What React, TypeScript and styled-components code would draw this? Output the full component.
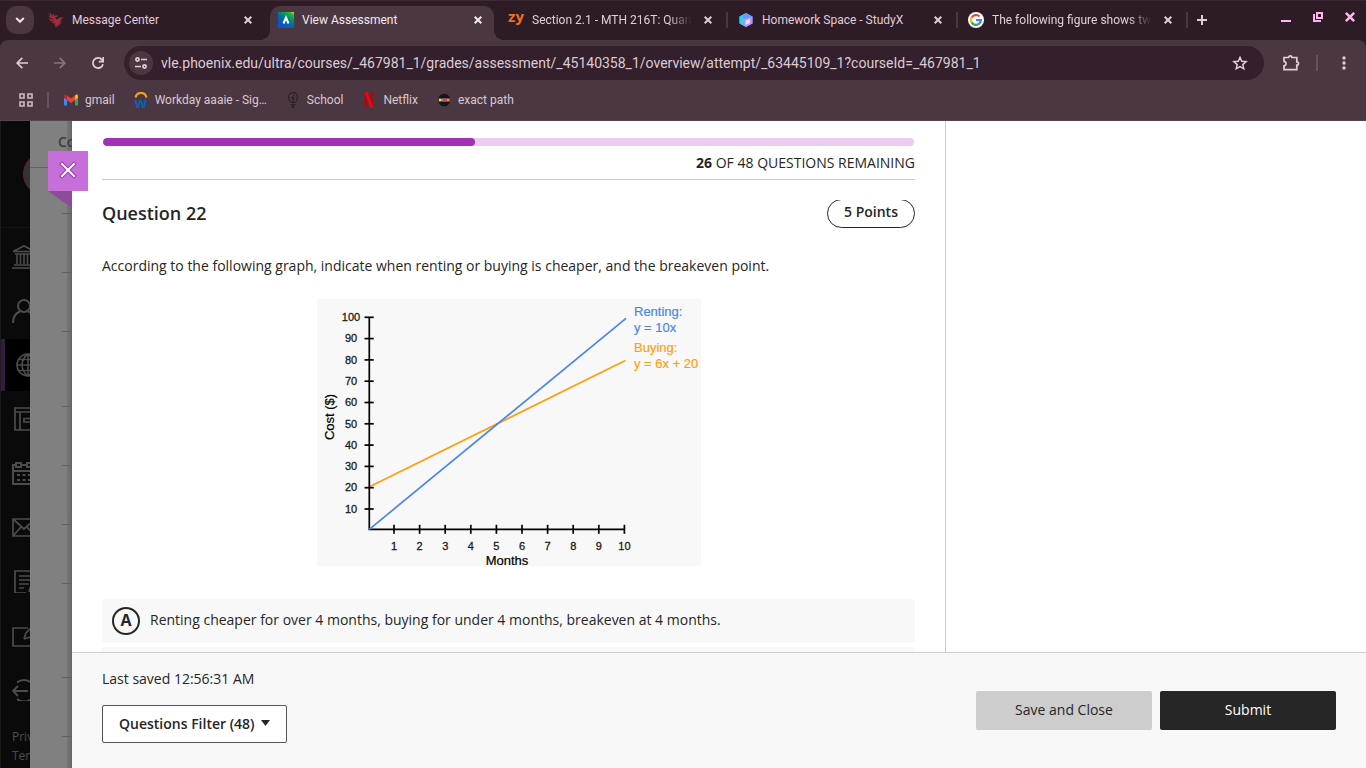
import React from "react";
import styled, { createGlobalStyle, css } from "styled-components";

const GlobalStyle = createGlobalStyle`
  *, *::before, *::after { box-sizing: border-box; }
  html, body { margin: 0; height: 100%; overflow: hidden; }
  body { background: #fff; color: #262626; font-family: "Open Sans", sans-serif; font-size: 14px; }
  #root { height: 100%; }
  button { font: inherit; color: inherit; cursor: pointer; }
  a { color: inherit; text-decoration: none; }
  svg { display: block; flex: none; }
`;

const Window = styled.div`
  display: flex;
  flex-direction: column;
  height: 100vh;
`;

/* ---------- Browser chrome ---------- */

const Chrome = styled.header`
  flex: none;
  background: #2d1b26;
  color: #e3cbd8;
  font-family: Roboto, sans-serif;
`;

const TabStrip = styled.div`
  display: flex;
  height: 40px;
  padding: 5px 6px 0;
  gap: 6px;
  border-top: 1px solid #3c2934;
`;

const PlainButton = styled.button`
  display: flex;
  align-items: center;
  justify-content: center;
  flex: none;
  padding: 0;
  border: 0;
  background: none;
`;

const TabSearch = styled(PlainButton)`
  width: 28px;
  height: 28px;
  border-radius: 10px;
  background: #4b3742;
  color: #f0dfe8;
`;

const Tab = styled.div<{ $active?: boolean; $divided?: boolean }>`
  position: relative;
  display: flex;
  flex: 0 1 224px;
  min-width: 0;
  height: 34px;
  padding: 0 8px 6px;
  align-items: center;
  gap: 8px;
  font-size: 12px;
  ${(p) =>
    p.$active &&
    css`
      background: #4b3742;
      color: #f5e9f0;
      border-radius: 10px 10px 0 0;
      &::before,
      &::after {
        content: "";
        position: absolute;
        bottom: 0;
        width: 10px;
        height: 10px;
      }
      &::before {
        left: -10px;
        background: radial-gradient(circle at 0 0, transparent 10px, #4b3742 10px);
      }
      &::after {
        right: -10px;
        background: radial-gradient(circle at 100% 0, transparent 10px, #4b3742 10px);
      }
    `}
  ${(p) =>
    p.$divided &&
    css`
      &::after {
        content: "";
        position: absolute;
        right: -4px;
        top: 6px;
        width: 2px;
        height: 16px;
        background: #4b3742;
      }
    `}
`;

const TabTitle = styled.span<{ $fade?: boolean }>`
  flex: 1;
  min-width: 0;
  overflow: hidden;
  white-space: nowrap;
  line-height: 16px;
  ${(p) => p.$fade && css`mask-image: linear-gradient(to right, #000 calc(100% - 24px), transparent);`}
`;

const TabClose = styled(PlainButton)`
  width: 16px;
  height: 16px;
`;

const NewTab = styled(PlainButton)`
  width: 24px;
  height: 28px;
`;

const WindowControls = styled.div`
  display: flex;
  margin-left: auto;
  height: 22px;
  gap: 16px;
  padding-right: 2px;
  color: #ffb5ee;
`;

const WindowButton = styled(PlainButton)`
  width: 16px;
`;

const Toolbar = styled.div`
  display: flex;
  align-items: center;
  height: 46px;
  padding: 0 5px;
  background: #4b3742;
  border-radius: 8px 8px 0 0;
`;

const NavButton = styled(PlainButton)<{ $dim?: boolean }>`
  width: 34px;
  height: 34px;
  margin-right: 4px;
  color: ${(p) => (p.$dim ? "#8a7380" : "#e8c9db")};
`;

const AddressBar = styled.form`
  display: flex;
  flex: 1;
  min-width: 0;
  align-items: center;
  height: 34px;
  margin-left: 5px;
  padding: 0 14px 0 5px;
  border-radius: 17px;
  background: #33202c;
`;

const SiteInfo = styled(PlainButton)`
  width: 24px;
  height: 24px;
  border-radius: 12px;
  background: #4b3742;
`;

const Address = styled.input`
  flex: 1;
  min-width: 0;
  padding: 0 8px;
  border: 0;
  outline: 0;
  background: none;
  color: #dccbd5;
  font: 14px/20px Roboto, sans-serif;
`;

const ToolbarEnd = styled.div`
  display: flex;
  align-items: center;
  margin-left: 17px;
  color: #e8c9db;
`;

const Divider = styled.span`
  flex: none;
  width: 2px;
  height: 16px;
  background: #66525d;
`;

const Extensions = styled(PlainButton)`
  width: 20px;
  height: 20px;
  margin-right: 15px;
`;

const Menu = styled(PlainButton)`
  width: 16px;
  height: 20px;
  margin: 0 9px 0 18px;
`;

const Bookmarks = styled.nav`
  display: flex;
  align-items: center;
  height: 35px;
  padding: 0 19px 6px;
  background: #4b3742;
  border-bottom: 1px solid #564550;
  gap: 14px;
  font-size: 12px;
  line-height: 16px;
`;

const BookmarkList = styled.div`
  display: flex;
  gap: 18px;
`;

const Bookmark = styled.a`
  display: flex;
  align-items: center;
  gap: 6px;
  white-space: nowrap;
  color: #d9c7d1;
`;

/* ---------- Page behind the panel ---------- */

const Page = styled.div`
  display: flex;
  flex: 1;
  min-height: 0;
`;

const Sidebar = styled.nav`
  display: flex;
  flex-direction: column;
  flex: none;
  width: 30px;
  overflow: hidden;
  background: #0a0a0a;
  border-left: 1px solid #1b1b1b;
  color: #4c4c4c;
`;

const Profile = styled.div`
  flex: none;
  height: 107px;
  margin-bottom: 3px;
  padding: 31px 0 0 22px;
  border-bottom: 1px solid #141414;
`;

const Avatar = styled.div`
  width: 44px;
  height: 44px;
  border: 1px solid #6b1f1f;
  border-radius: 22px;
  background: #333;
`;

const SideLinks = styled.div`
  display: flex;
  flex-direction: column;
  flex: none;
  gap: 2px;
`;

const SideLink = styled.a<{ $active?: boolean }>`
  display: flex;
  align-items: center;
  height: 52px;
  padding-left: 11px;
  ${(p) =>
    p.$active &&
    css`
      background: #000;
      border-left: 4px solid #351a40;
    `}
`;

const Legal = styled.div`
  display: flex;
  flex-direction: column;
  margin-top: 12px;
  padding-left: 11px;
  font-size: 12px;
  line-height: 19px;
  white-space: nowrap;
`;

const Backdrop = styled.div`
  flex: none;
  width: 42px;
  overflow: hidden;
  background: linear-gradient(to right, #808080 37px, #747474 37px, #707070 40px, #626262);
`;

const BackdropTitle = styled.div`
  height: 47px;
  padding-left: 28px;
  border-bottom: 1px solid #636363;
  color: #3c3c3c;
  font-weight: 600;
  line-height: 42px;
`;

const BackdropRow = styled.div<{ $height: number }>`
  height: ${(p) => p.$height}px;
  margin-left: 32px;
  border-bottom: 1px solid #606060;
`;

/* ---------- Assessment panel ---------- */

const Panel = styled.main`
  position: relative;
  display: flex;
  flex-direction: column;
  flex: 1;
  min-width: 0;
  background: #fff;
`;

const CloseTab = styled.div`
  position: absolute;
  top: 30px;
  left: -24px;
`;

const ClosePanel = styled(PlainButton)`
  width: 40px;
  height: 40px;
  padding-bottom: 2px;
  background: #c66fd8;
`;

const Fold = styled.div`
  width: 24px;
  height: 17px;
  background: #8d4b9b;
  clip-path: polygon(0 0, 100% 0, 100% 100%);
`;

const Body = styled.div`
  display: flex;
  flex: 1;
  min-height: 0;
  overflow: hidden;
`;

const Assessment = styled.section`
  flex: 1;
  min-width: 0;
  padding: 17px 30px 0;
`;

const Side = styled.aside`
  flex: none;
  width: 421px;
  border-left: 1px solid #ccc;
`;

const Progress = styled.div`
  height: 8px;
  margin: 0 1px;
  border-radius: 4px;
  overflow: hidden;
  background: #ebcdf0;
`;

const ProgressFill = styled.div`
  height: 100%;
  border-radius: 4px;
  background: #a232b4;
`;

const Remaining = styled.p`
  margin: 0;
  padding: 7px 0 6px;
  border-bottom: 1px solid #ccc;
  line-height: 20px;
  text-align: right;
`;

const QuestionHead = styled.div`
  display: flex;
  align-items: flex-end;
  justify-content: space-between;
  height: 28px;
  margin-top: 20px;
  overflow: hidden;
`;

const QuestionTitle = styled.h2`
  margin: 0;
  padding-bottom: 2px;
  font-size: 18px;
  font-weight: 600;
  line-height: 26px;
`;

const Points = styled.span`
  flex: none;
  width: 88px;
  height: 29px;
  border: 1px solid #262626;
  border-radius: 15px;
  font-weight: 600;
  line-height: 24px;
  text-align: center;
`;

const Prompt = styled.p`
  margin: 28px 0 23px;
  line-height: 20px;
`;

const Figure = styled.figure`
  display: flex;
  justify-content: center;
  margin: 0 0 33px;
`;

const Options = styled.ul`
  display: flex;
  flex-direction: column;
  gap: 4px;
  margin: 0;
  padding: 0;
  list-style: none;
`;

const Option = styled.li`
  display: flex;
  align-items: center;
  height: 44px;
  padding: 0 10px;
  gap: 10px;
  border-radius: 3px;
  background: #f8f8f8;
  line-height: 20px;
`;

const OptionText = styled.span`
  padding-bottom: 2px;
`;

const Letter = styled.span`
  display: flex;
  align-items: center;
  justify-content: center;
  width: 28px;
  height: 28px;
  padding-bottom: 2px;
  border: 2px solid #262626;
  border-radius: 14px;
  font-size: 16px;
  font-weight: 700;
`;

const Footer = styled.footer`
  display: flex;
  flex: none;
  justify-content: space-between;
  align-items: flex-end;
  padding: 16px 30px 25px;
  border-top: 1px solid #ccc;
  background: #f8f8f8;
`;

const Saved = styled.p`
  margin: 0 0 16px;
  line-height: 20px;
`;

const Filter = styled.button`
  display: flex;
  align-items: center;
  gap: 6px;
  height: 38px;
  padding: 0 16px 2px;
  border: 1px solid #555;
  border-radius: 2px;
  background: #fff;
  font-weight: 600;
`;

const Actions = styled.div`
  display: flex;
  gap: 8px;
  padding-bottom: 13px;
`;

const Action = styled.button<{ $primary?: boolean }>`
  width: 176px;
  height: 39px;
  padding: 0 0 2px;
  border: 0;
  border-radius: 2px;
  background: ${(p) => (p.$primary ? "#262626" : "#cdcdcd")};
  color: ${(p) => (p.$primary ? "#fff" : "#262626")};
`;

/* ---------- Icons ---------- */

const Cross = ({ size = 8, width = 2 }: { size?: number; width?: number }) => (
  <svg width={size} height={size} viewBox="0 0 8 8" stroke="currentColor" strokeWidth={width} fill="none">
    <path d="M.7.7 7.3 7.3M7.3.7.7 7.3" />
  </svg>
);

const PhoenixLogo = () => (
  <svg width="16" height="16" viewBox="0 0 16 16" fill="#9c3038">
    <path d="M.2.8 3.600 2.600 5.400 5.600 4 6.800 1.500 5 .2 3.400 2.800 4.600zM.4 5.600 3.200 7.400 5.800 7.800 5 9.600 2.400 9.200z" />
    <path d="M5.600 1.400C3.600 4 4 7 6 9.200L3.600 10.400 5.200 11.400 7.400 11 5.800 13.600 7.800 12.800 6.800 15.800 8.400 14.600 9.400 15.800 9.600 12.600 12 14 11 11.400 14.200 11.800 12 10 15 8.600 11.800 8.400 15.800 5.600 11.400 5.400 9.200 7.600 7.600 6.800 7.800 5 10.600 4.200 8.800 3.200 6.600 4z" />
  </svg>
);

const BlackboardLogo = () => (
  <svg width="16" height="16" viewBox="0 0 16 16">
    <defs>
      <linearGradient id="bb" x1="0.3" y1="1" x2="1" y2="0">
        <stop offset="0.1" stopColor="#0a55c2" />
        <stop offset="0.4" stopColor="#0668a8" />
        <stop offset="0.65" stopColor="#069a5c" />
        <stop offset="0.85" stopColor="#35b23c" />
        <stop offset="1" stopColor="#e8f000" />
      </linearGradient>
    </defs>
    <rect width="16" height="16" fill="url(#bb)" />
    <path d="M5.500 11.500 8 5.500l2.500 6" fill="none" stroke="#fff" strokeWidth="2" />
  </svg>
);

const ZyLogo = () => (
  <svg width="16" height="16" viewBox="0 0 16 16">
    <text x="8" y="10" textAnchor="middle" fontFamily="Open Sans" fontWeight="700" fontSize="15" fill="#f2701c">
      zy
    </text>
  </svg>
);

const StudyLogo = () => (
  <svg width="16" height="16" viewBox="0 0 16 16">
    <path d="m8 1 6.500 3.500v7L8 15 1.500 11.500v-7z" fill="#8a7cf4" />
    <path d="M8 1 1.500 4.500v7L6 14V6.500z" fill="#35cdf0" />
    <path d="m8 1 6.500 3.500L9 8 4 5z" fill="#5f9cf8" />
    <path d="M6 7 14.500 4.500v7L8 15l-2-1z" fill="#b394fb" />
    <path d="m7.500 8.500 4.500-2v4.500l-4.500 2z" fill="#eadcff" />
  </svg>
);

const GoogleLogo = () => (
  <svg width="16" height="16" viewBox="0 0 16 16" fill="none" strokeWidth="2.200">
    <circle cx="8" cy="8" r="8" fill="#fff" />
    <path d="M3.600 5.500A5 5 0 0 1 11.500 4.500" stroke="#ea4335" />
    <path d="M3.600 10.400a5 5 0 0 1 0-4.900" stroke="#fbbc05" />
    <path d="M11.200 11.700a5 5 0 0 1-7.600-1.300" stroke="#34a853" />
    <path d="M8 8.100h4.900a5 5 0 0 1-1.700 3.600" stroke="#4285f4" />
  </svg>
);

const GmailLogo = () => (
  <svg width="16" height="16" viewBox="0 0 16 16">
    <path d="M1 4v8.500a1 1 0 0 0 1 1h2V6.500z" fill="#4285f4" />
    <path d="M15 4v8.500a1 1 0 0 1-1 1h-2V6.500z" fill="#34a853" />
    <path d="M12 3.500 12 8l3-2.200V4c0-1.500-1.500-1.800-2.400-1z" fill="#fbbc04" />
    <path d="M1 4v1.800L4 8V3.500L3.400 3C2.500 2.200 1 2.500 1 4z" fill="#c5221f" />
    <path d="M4 8V3.500l4 3 4-3V8l-4 3z" fill="#ea4335" />
  </svg>
);

const WorkdayLogo = () => (
  <svg width="16" height="16" viewBox="0 0 16 16">
    <path d="M2.500 5.500C4 -.5 12 -.5 13.500 5.500" fill="none" stroke="#f6a01a" strokeWidth="2.200" />
    <text x="8" y="16" textAnchor="middle" fontFamily="Open Sans" fontWeight="700" fontSize="15" fill="#0c5eb4">
      w
    </text>
  </svg>
);

const BulbIcon = () => (
  <svg width="16" height="16" viewBox="0 0 16 16" fill="none" stroke="#2a2227" strokeWidth="1.200">
    <path d="M5.500 10.500C4.500 9 3.500 7.500 3.500 5.200a4.500 4.500 0 0 1 9 0c0 2.300-1 3.800-2 5.300zM5.500 12.500h5M6 14.200h4M7 15.500h2" />
    <path d="M9 3 7 6.200h2L7.500 10" />
  </svg>
);

const NetflixLogo = () => (
  <svg width="16" height="16" viewBox="0 0 16 16">
    <path d="M3.500 0h3v16l-3 .2zM9.500 0h3v16l-3-.3z" fill="#a80a12" />
    <path d="M3.500 0h3l6 16-3-.3z" fill="#e50914" />
  </svg>
);

const ExactPathLogo = () => (
  <svg width="16" height="16" viewBox="0 0 16 16">
    <path d="M4 5a5 5 0 0 1 8.500 0zM4 11a5 5 0 0 0 8.500 0z" fill="none" stroke="#151515" strokeWidth="2" />
    <path d="M3 8h2" stroke="#f7e018" strokeWidth="2.600" />
    <path d="M5 8h2" stroke="#1cc7d0" strokeWidth="2.600" />
    <path d="M7 8h3.500" stroke="#ee2a7b" strokeWidth="3.400" />
    <path d="M10.500 8H13.500" stroke="#f68b2c" strokeWidth="2.600" />
  </svg>
);

const SideIcon = ({ children }: { children: React.ReactNode }) => (
  <svg width="24" height="24" viewBox="0 0 24 24" fill="none" stroke="currentColor" strokeWidth="2">
    {children}
  </svg>
);

/* ---------- Chart ---------- */

const AXIS_X = 52;
const AXIS_Y = 230;

const CostChart = () => (
  <svg
    width="384"
    height="267"
    viewBox="0 0 384 267"
    fontFamily="Liberation Sans, sans-serif"
    fontSize="13"
    role="img"
    aria-label="Cost in dollars by months for renting and buying"
  >
    <rect width="384" height="267" fill="#f8f8f8" />
    <path d={`M${AXIS_X} ${AXIS_Y - 42}L308.300 61.600`} stroke="#ff9f0d" strokeWidth="1.700" />
    <g stroke="#000" strokeWidth="1.700" fill="none">
      <path d="M52.300 18V230.300H308" />
      {Array.from({ length: 10 }, (_, i) => (
        <path key={i} d={`M47.500 ${18.300 + i * 21.300}h9.200`} />
      ))}
      {Array.from({ length: 10 }, (_, i) => (
        <path key={i} d={`M${77 + i * 25.600} 225.800v9`} />
      ))}
    </g>
    <path d="M52.300 230.300 309 19.300" stroke="#4a86e8" strokeWidth="1.700" />
    <g fontSize="11" textAnchor="middle" fill="#1a1a1a" stroke="#1a1a1a" strokeWidth=".3">
      {Array.from({ length: 10 }, (_, i) => (
        <text key={i} x="34" y={22 + i * 21.300}>
          {100 - i * 10}
        </text>
      ))}
      {Array.from({ length: 10 }, (_, i) => (
        <text key={i} x={77 + i * 25.600} y="251">
          {i + 1}
        </text>
      ))}
    </g>
    <g fill="#000" stroke="#000" strokeWidth=".2" textAnchor="middle">
      <text x="190" y="266">Months</text>
      <text transform="translate(17 118) rotate(-90)">Cost ($)</text>
    </g>
    <g fill="#4a86e8" stroke="#4a86e8" strokeWidth=".2">
      <text x="317" y="17">Renting:</text>
      <text x="317" y="33">y = 10x</text>
    </g>
    <g fill="#ff9f0d" stroke="#ff9f0d" strokeWidth=".2">
      <text x="317" y="53">Buying:</text>
      <text x="317" y="69">y = 6x + 20</text>
    </g>
  </svg>
);

/* ---------- Data ---------- */

const tabs = [
  { title: "Message Center", icon: <PhoenixLogo /> },
  { title: "View Assessment", icon: <BlackboardLogo />, active: true },
  { title: "Section 2.1 - MTH 216T: Quantitative", icon: <ZyLogo />, divided: true, fade: true },
  { title: "Homework Space - StudyX", icon: <StudyLogo />, divided: true },
  { title: "The following figure shows two", icon: <GoogleLogo />, divided: true, fade: true },
];

const bookmarks = [
  { label: "gmail", icon: <GmailLogo /> },
  { label: "Workday aaaie - Sig…", icon: <WorkdayLogo /> },
  { label: "School", icon: <BulbIcon /> },
  { label: "Netflix", icon: <NetflixLogo /> },
  { label: "exact path", icon: <ExactPathLogo /> },
];

const sideLinks = [
  { name: "Institution", icon: <path d="M1 6.500 12 1l11 5.500M1 6.500h22M3 9h18M5 9v10M8.500 9v10M12 9v10M15.500 9v10M19 9v10M2 20h20M0 23h24" strokeWidth="1.600" /> },
  { name: "Profile", icon: <path d="M12 1a6 6 0 1 1 0 12 6 6 0 0 1 0-12M1 24c0-6 3-10 7-11.500M23 24c0-6-3-10-7-11.500" /> },
  { name: "Courses", active: true, icon: <path d="M12 1a11 11 0 1 1 0 22 11 11 0 0 1 0-22M1 12h22M12 1v22M3 6.500h18M3 17.500h18M12 1C4 7 4 17 12 23M12 1c8 6 8 16 0 22" strokeWidth="1.600" /> },
  { name: "Organizations", icon: <path d="M3 1h20v22H3zM3 5h20M8 5v18M12 11.500h8v3.500h-8z" strokeWidth="1.700" /> },
  { name: "Calendar", icon: <path d="M4 4H1v19h22V4h-3M9 4h6M4 2h5v4H4zM15 2h5v4h-5zM1 10h22M5 14h3M10.500 14h3M16 14h3M5 19h3M10.500 19h3M16 19h3" /> },
  { name: "Messages", icon: <path d="M1 4h22v17H1zM1 4l11 10L23 4M1 21l8-9M23 21l-8-9" strokeWidth="1.700" /> },
  { name: "Grades", icon: <path d="M23 15V2H3v22h11M7 7h12M7 11h12M7 15h10M7 19h5M17 23l1-4 5-5" strokeWidth="1.700" /> },
  { name: "Tools", icon: <path d="M16 5H1v18h21V13M12 16l2-6L22 2M12 16l6-2" strokeWidth="1.700" /> },
  { name: "Sign Out", icon: <path d="M16 14H1M6 9l-5 5 5 5M5 5.500a11 11 0 0 1 14 0M5 22a11 11 0 0 0 14 0" strokeWidth="1.800" /> },
];

const backdropRows = [46, 59, 59, 75, 59, 59, 59, 94, 59];

const questions = { total: 48, remaining: 26 };

export default function App() {
  const answered = ((questions.total - questions.remaining) / questions.total) * 100;
  return (
    <Window>
      <GlobalStyle />
      <Chrome>
        <TabStrip>
          <TabSearch aria-label="Search tabs">
            <svg width="10" height="10" viewBox="0 0 10 10" fill="none" stroke="currentColor" strokeWidth="2">
              <path d="m1.200 3 3.800 3.800L8.800 3" />
            </svg>
          </TabSearch>
          {tabs.map((t) => (
            <Tab key={t.title} $active={t.active} $divided={t.divided}>
              {t.icon}
              <TabTitle $fade={t.fade}>{t.title}</TabTitle>
              <TabClose aria-label={`Close ${t.title}`}>
                <Cross />
              </TabClose>
            </Tab>
          ))}
          <NewTab aria-label="New tab">
            <svg width="10" height="10" viewBox="0 0 10 10" stroke="currentColor" strokeWidth="2">
              <path d="M5 0v10M0 5h10" />
            </svg>
          </NewTab>
          <WindowControls>
            <WindowButton aria-label="Minimize">
              <svg width="10" height="10" viewBox="0 0 10 10">
                <path d="M0 8h10v2H0z" fill="currentColor" />
              </svg>
            </WindowButton>
            <WindowButton aria-label="Restore">
              <svg width="10" height="10" viewBox="0 0 10 10" fill="none" stroke="currentColor" strokeWidth="2">
                <path d="M4 1h5v5H4zM1 2v7h7" />
              </svg>
            </WindowButton>
            <WindowButton aria-label="Close window">
              <Cross size={10} />
            </WindowButton>
          </WindowControls>
        </TabStrip>
        <Toolbar>
          <NavButton aria-label="Back">
            <svg width="12" height="12" viewBox="0 0 12 12" fill="none" stroke="currentColor" strokeWidth="1.700">
              <path d="M12 6H1.200M6.300.8 1.100 6l5.200 5.200" />
            </svg>
          </NavButton>
          <NavButton aria-label="Forward" $dim>
            <svg width="12" height="12" viewBox="0 0 12 12" fill="none" stroke="currentColor" strokeWidth="1.700">
              <path d="M0 6h10.800M5.700.8 10.900 6l-5.200 5.200" />
            </svg>
          </NavButton>
          <NavButton aria-label="Reload">
            <svg width="12" height="12" viewBox="0 0 12 12" fill="none" stroke="currentColor" strokeWidth="1.700">
              <path d="M11 7.200A5.100 5.100 0 1 1 10.100 2.900L11 4" />
              <path d="M11.200 0v4.600H6.800" />
            </svg>
          </NavButton>
          <AddressBar>
            <SiteInfo type="button" aria-label="Site information">
              <svg width="12" height="12" viewBox="0 0 12 12" fill="none" stroke="currentColor" strokeWidth="1.700">
                <circle cx="2.500" cy="2.500" r="1.600" />
                <circle cx="9.500" cy="9.500" r="1.600" />
                <path d="M6 2.500h6M0 9.500h6" />
              </svg>
            </SiteInfo>
            <Address
              aria-label="Address"
              defaultValue="vle.phoenix.edu/ultra/courses/_467981_1/grades/assessment/_45140358_1/overview/attempt/_63445109_1?courseId=_467981_1"
            />
            <PlainButton type="button" aria-label="Bookmark this page">
              <svg width="20" height="16" viewBox="0 0 20 16" fill="none" stroke="currentColor" strokeWidth="1.500">
                <path d="m10 2.300 1.700 4 4.400.4-3.300 2.900 1 4.200-3.800-2.200-3.800 2.200 1-4.200-3.300-2.900 4.400-.4z" />
              </svg>
            </PlainButton>
          </AddressBar>
          <ToolbarEnd>
            <Extensions aria-label="Extensions">
              <svg width="18" height="18" viewBox="0 0 18 18" fill="none" stroke="currentColor" strokeWidth="1.700">
                <path d="M2 3.500h4.600a1.600 1.600 0 0 1 3.200 0h5v4.300a1.600 1.600 0 0 1 0 3.400v4.500H2v-3.800c2.800-.7 2.800-4 0-4.600z" />
              </svg>
            </Extensions>
            <Divider />
            <Menu aria-label="Menu">
              <svg width="4" height="14" viewBox="0 0 4 14" fill="currentColor">
                <circle cx="2" cy="2" r="1.700" />
                <circle cx="2" cy="7" r="1.700" />
                <circle cx="2" cy="12" r="1.700" />
              </svg>
            </Menu>
          </ToolbarEnd>
        </Toolbar>
        <Bookmarks>
          <PlainButton aria-label="All apps">
            <svg width="14" height="14" viewBox="0 0 14 14" fill="none" stroke="#cdbbc5" strokeWidth="1.600">
              <path d="M1 1h4v4H1zM9 1h4v4H9zM1 9h4v4H1zM9 9h4v4H9z" />
            </svg>
          </PlainButton>
          <Divider />
          <BookmarkList>
            {bookmarks.map((b) => (
              <Bookmark key={b.label} href="#">
                {b.icon}
                {b.label}
              </Bookmark>
            ))}
          </BookmarkList>
        </Bookmarks>
      </Chrome>

      <Page>
        <Sidebar>
          <Profile>
            <Avatar />
          </Profile>
          <SideLinks>
            {sideLinks.map((l) => (
              <SideLink key={l.name} href="#" aria-label={l.name} $active={l.active}>
                <SideIcon>{l.icon}</SideIcon>
              </SideLink>
            ))}
          </SideLinks>
          <Legal>
            <a href="#">Privacy</a>
            <a href="#">Terms</a>
          </Legal>
        </Sidebar>
        <Backdrop>
          <BackdropTitle>Content</BackdropTitle>
          {backdropRows.map((h, i) => (
            <BackdropRow key={i} $height={h} />
          ))}
        </Backdrop>

        <Panel>
          <Body>
            <Assessment>
              <Progress role="progressbar" aria-label="Questions answered" aria-valuenow={Math.round(answered)}>
                <ProgressFill style={{ width: `${answered}%` }} />
              </Progress>
              <Remaining>
                <b>{questions.remaining}</b> OF {questions.total} QUESTIONS REMAINING
              </Remaining>
              <QuestionHead>
                <QuestionTitle>Question 22</QuestionTitle>
                <Points>5 Points</Points>
              </QuestionHead>
              <Prompt>
                According to the following graph, indicate when renting or buying is cheaper, and the breakeven point.
              </Prompt>
              <Figure>
                <CostChart />
              </Figure>
              <Options>
                <Option>
                  <Letter>A</Letter>
                  <OptionText>
                    Renting cheaper for over 4 months, buying for under 4 months, breakeven at 4 months.
                  </OptionText>
                </Option>
                <Option />
              </Options>
            </Assessment>
            <Side />
          </Body>
          <Footer>
            <div>
              <Saved>Last saved 12:56:31 AM</Saved>
              <Filter>
                Questions Filter (48)
                <svg width="9" height="6" viewBox="0 0 9 6" fill="currentColor">
                  <path d="M0 0h9L4.500 6z" />
                </svg>
              </Filter>
            </div>
            <Actions>
              <Action>Save and Close</Action>
              <Action $primary>Submit</Action>
            </Actions>
          </Footer>
          <CloseTab>
            <ClosePanel aria-label="Close assessment">
              <svg width="18" height="18" viewBox="0 0 18 18" fill="none" strokeLinecap="square">
                <path d="m3 3 12 12M15 3 3 15" stroke="#9c34ae" strokeWidth="4" />
                <path d="m3 3 12 12M15 3 3 15" stroke="#fff" strokeWidth="2" />
              </svg>
            </ClosePanel>
            <Fold />
          </CloseTab>
        </Panel>
      </Page>
    </Window>
  );
}
